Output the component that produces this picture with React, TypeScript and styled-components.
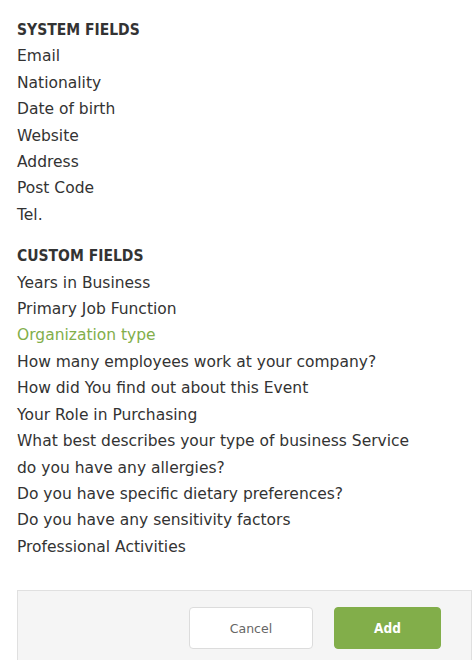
import React from "react";
import styled, { createGlobalStyle } from "styled-components";

const Global = createGlobalStyle`
  html, body { margin: 0; padding: 0; background: #fff; }
  body { font-family: "DejaVu Sans", "Noto Sans", sans-serif; color: #333; }
`;

const Page = styled.div`
  padding: 17px 4px 0 17px;
  width: 476px;
  box-sizing: border-box;
`;

const Section = styled.div`
  display: flex;
  flex-direction: column;
  margin-bottom: 15px;
`;

const Heading = styled.div`
  font-family: "DejaVu Sans Condensed", "DejaVu Sans", sans-serif;
  font-weight: 700;
  font-size: 15.5px;
  line-height: 26.4px;
  color: #333;
`;

const Item = styled.div<{ $active?: boolean }>`
  font-size: 15.5px;
  line-height: 26.4px;
  color: ${(p) => (p.$active ? "#82ae4a" : "#333")};
`;

const Footer = styled.div`
  margin-top: 30px;
  background: #f5f5f5;
  border: 1px solid #e0e0e0;
  display: flex;
  justify-content: flex-end;
  gap: 21px;
  padding: 16px 30px 20px 0;
  height: 80px;
  box-sizing: border-box;
`;

const Button = styled.button<{ $primary?: boolean }>`
  height: 42px;
  width: ${(p) => (p.$primary ? "107px" : "124px")};
  border-radius: 4px;
  font-family: ${(p) => (p.$primary ? `"DejaVu Sans Condensed", "DejaVu Sans", sans-serif` : `"DejaVu Sans", sans-serif`)};
  font-size: ${(p) => (p.$primary ? "13.5px" : "12.5px")};
  font-weight: ${(p) => (p.$primary ? 700 : 400)};
  color: ${(p) => (p.$primary ? "#fff" : "#666")};
  background: ${(p) => (p.$primary ? "#82ae4a" : "#fff")};
  border: 1px solid ${(p) => (p.$primary ? "#82ae4a" : "#dcdcdc")};
  cursor: pointer;
`;

const system = ["Email", "Nationality", "Date of birth", "Website", "Address", "Post Code", "Tel."];
const custom = [
  "Years in Business",
  "Primary Job Function",
  "Organization type",
  "How many employees work at your company?",
  "How did You find out about this Event",
  "Your Role in Purchasing",
  "What best describes your type of business Service",
  "do you have any allergies?",
  "Do you have specific dietary preferences?",
  "Do you have any sensitivity factors",
  "Professional Activities",
];

export default function App() {
  return (
    <>
      <Global />
      <Page>
        <Section>
          <Heading>SYSTEM FIELDS</Heading>
          {system.map((s) => (
            <Item key={s}>{s}</Item>
          ))}
        </Section>
        <Section>
          <Heading>CUSTOM FIELDS</Heading>
          {custom.map((s) => (
            <Item key={s} $active={s === "Organization type"}>
              {s}
            </Item>
          ))}
        </Section>
        <Footer>
          <Button>Cancel</Button>
          <Button $primary>Add</Button>
        </Footer>
      </Page>
    </>
  );
}
